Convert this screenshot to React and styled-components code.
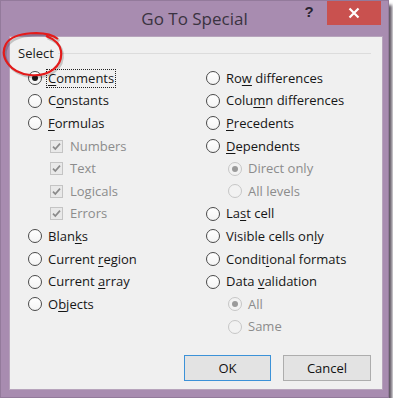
import React from "react";
import styled, { createGlobalStyle } from "styled-components";

const Global = createGlobalStyle`
  html, body { margin: 0; padding: 0; background: #ffffff; }
  body { font-family: "Open Sans", "Noto Sans", sans-serif; }
`;

const Window = styled.div`
  position: relative;
  width: 389px;
  height: 398px;
  box-sizing: border-box;
  background: #a88cb0;
  border: 1px solid #937a9b;
  box-shadow: 3px 5px 3px rgba(40, 30, 45, 0.75);
  display: flex;
  flex-direction: column;
`;

const TitleBar = styled.div`
  height: 35px;
  display: flex;
  align-items: flex-start;
  position: relative;
`;

const Title = styled.div`
  position: absolute;
  left: 0;
  right: 0;
  top: 6px;
  text-align: center;
  font-size: 17px;
  color: #3a3340;
`;

const TitleButtons = styled.div`
  margin-left: auto;
  margin-right: 7px;
  display: flex;
  align-items: flex-start;
`;

const HelpButton = styled.div`
  width: 36px;
  height: 24px;
  display: flex;
  align-items: center;
  justify-content: center;
  font-size: 15px;
  font-weight: 700;
  color: #2a2430;
  margin-top: -2px;
  font-family: "Liberation Sans", sans-serif;
`;

const CloseButton = styled.div`
  width: 54px;
  height: 24px;
  background: #c9514f;
  display: flex;
  align-items: center;
  justify-content: center;
`;

const Panel = styled.div`
  margin: 0 5px 7px 8px;
  flex: 1;
  background: #f0f0f0;
  border: 1px solid #b7a4bc;
  padding: 5px 11px 8px 8px;
  display: flex;
  flex-direction: column;
  position: relative;
`;

const GroupHeader = styled.div`
  display: flex;
  align-items: center;
  height: 22px;
  gap: 4px;
`;

const GroupLabel = styled.span`
  font-size: 13px;
  color: #1b1b1b;
`;

const GroupLine = styled.div`
  flex: 1;
  height: 1px;
  background: #dcdcdc;
`;

const Columns = styled.div`
  display: grid;
  grid-template-columns: 178px 1fr;
  padding-left: 10px;
  margin-top: 3px;
`;

const Column = styled.div`
  display: flex;
  flex-direction: column;
`;

const Row = styled.div`
  height: 22.6px;
  display: flex;
  align-items: center;
  gap: ${(p) => (p.$check ? "6px" : "5px")};
  padding-left: ${(p) => (p.$indent ? "22px" : "0")};
`;

const RadioCircle = styled.span`
  width: 14px;
  height: 14px;
  border-radius: 50%;
  box-sizing: border-box;
  border: 1px solid ${(p) => (p.$disabled ? "#c6c6c6" : "#4a4a4a")};
  background: ${(p) => (p.$disabled ? "#f2f2f2" : "linear-gradient(#ffffff, #f4f4f4)")};
  display: flex;
  align-items: center;
  justify-content: center;
  flex: none;
  &::after {
    content: "";
    display: ${(p) => (p.$checked ? "block" : "none")};
    width: 6px;
    height: 6px;
    border-radius: 50%;
    background: ${(p) => (p.$disabled ? "#9a9a9a" : "#1a1a1a")};
  }
`;

const CheckBox = styled.span`
  width: 13px;
  height: 13px;
  box-sizing: border-box;
  border: 1px solid #c4c4c4;
  background: #e9e9e9;
  display: flex;
  align-items: center;
  justify-content: center;
  flex: none;
`;

const Label = styled.span`
  font-size: 13px;
  color: ${(p) => (p.$disabled ? "#8c8c8c" : "#161616")};
  line-height: 17px;
  padding: 0 1px;
  outline: ${(p) => (p.$focus ? "1px dotted #222" : "none")};
  white-space: nowrap;
  u { text-decoration-thickness: 1px; text-underline-offset: 2px; }
`;

const ButtonRow = styled.div`
  margin-top: auto;
  display: flex;
  justify-content: flex-end;
  gap: 12px;
`;

const Button = styled.button`
  width: ${(p) => p.$w}px;
  height: 26px;
  box-sizing: border-box;
  background: #e3e3e3;
  border: 1px solid ${(p) => (p.$default ? "#3c92d8" : "#adadad")};
  font-family: "Open Sans", "Noto Sans", sans-serif;
  font-size: 13px;
  color: #111;
  padding: 0;
`;

const Ring = styled.svg`
  position: absolute;
  left: -10px;
  top: -8px;
  pointer-events: none;
`;

const Check = () => (
  <svg width="11" height="11" viewBox="0 0 11 11">
    <path d="M2 5.6 L4.3 8 L9 2.6" fill="none" stroke="#8a8a8a" strokeWidth="1.7" />
  </svg>
);

const label = (text, u) => {
  if (u == null) return text;
  return (
    <>
      {text.slice(0, u)}
      <u>{text[u]}</u>
      {text.slice(u + 1)}
    </>
  );
};

const leftItems = [
  { t: "Comments", u: 0, checked: true, focus: true },
  { t: "Constants", u: 1 },
  { t: "Formulas", u: 0 },
  { t: "Numbers", check: true },
  { t: "Text", check: true },
  { t: "Logicals", check: true },
  { t: "Errors", check: true },
  { t: "Blanks", u: 4 },
  { t: "Current region", u: 8 },
  { t: "Current array", u: 8 },
  { t: "Objects", u: 1 },
];

const rightItems = [
  { t: "Row differences", u: 2 },
  { t: "Column differences", u: 4 },
  { t: "Precedents", u: 0 },
  { t: "Dependents", u: 0 },
  { t: "Direct only", sub: true, checked: true },
  { t: "All levels", sub: true },
  { t: "Last cell", u: 2 },
  { t: "Visible cells only", u: 16 },
  { t: "Conditional formats", u: 6 },
  { t: "Data validation", u: 5 },
  { t: "All", sub: true, checked: true },
  { t: "Same", sub: true },
];

const Item = ({ it }) => {
  if (it.check) {
    return (
      <Row $indent $check>
        <CheckBox>
          <Check />
        </CheckBox>
        <Label $disabled>{it.t}</Label>
      </Row>
    );
  }
  return (
    <Row $indent={it.sub}>
      <RadioCircle $checked={it.checked} $disabled={it.sub} />
      <Label $disabled={it.sub} $focus={it.focus}>
        {label(it.t, it.u)}
      </Label>
    </Row>
  );
};

const ringPath =
  "M56 6 C 45 -3, 12 -2, 4 11 C -3 24, 8 40, 28 42 C 47 44, 61 33, 59 18 C 58 11, 52 6, 44 3";

export default function App() {
  return (
    <>
      <Global />
      <Window>
        <TitleBar>
          <Title>Go To Special</Title>
          <TitleButtons>
            <HelpButton>?</HelpButton>
            <CloseButton>
              <svg width="12" height="12" viewBox="0 0 12 12">
                <path d="M1.5 1.5 L10.5 10.5 M10.5 1.5 L1.5 10.5" stroke="#fff" strokeWidth="2.2" />
              </svg>
            </CloseButton>
          </TitleButtons>
        </TitleBar>
        <Panel>
          <GroupHeader>
            <GroupLabel>Select</GroupLabel>
            <GroupLine />
          </GroupHeader>
          <Columns>
            <Column>
              {leftItems.map((it) => (
                <Item key={it.t} it={it} />
              ))}
            </Column>
            <Column>
              {rightItems.map((it) => (
                <Item key={it.t} it={it} />
              ))}
            </Column>
          </Columns>
          <ButtonRow>
            <Button $w={87} $default>OK</Button>
            <Button $w={88}>Cancel</Button>
          </ButtonRow>
          <Ring width="66" height="52" viewBox="-2 -4 66 52">
            <path d={ringPath} fill="none" stroke="rgba(0,0,0,0.18)" strokeWidth="2.5" transform="translate(1.5,2)" />
            <path d={ringPath} fill="none" stroke="#e31b1b" strokeWidth="2.2" />
          </Ring>
        </Panel>
      </Window>
    </>
  );
}
